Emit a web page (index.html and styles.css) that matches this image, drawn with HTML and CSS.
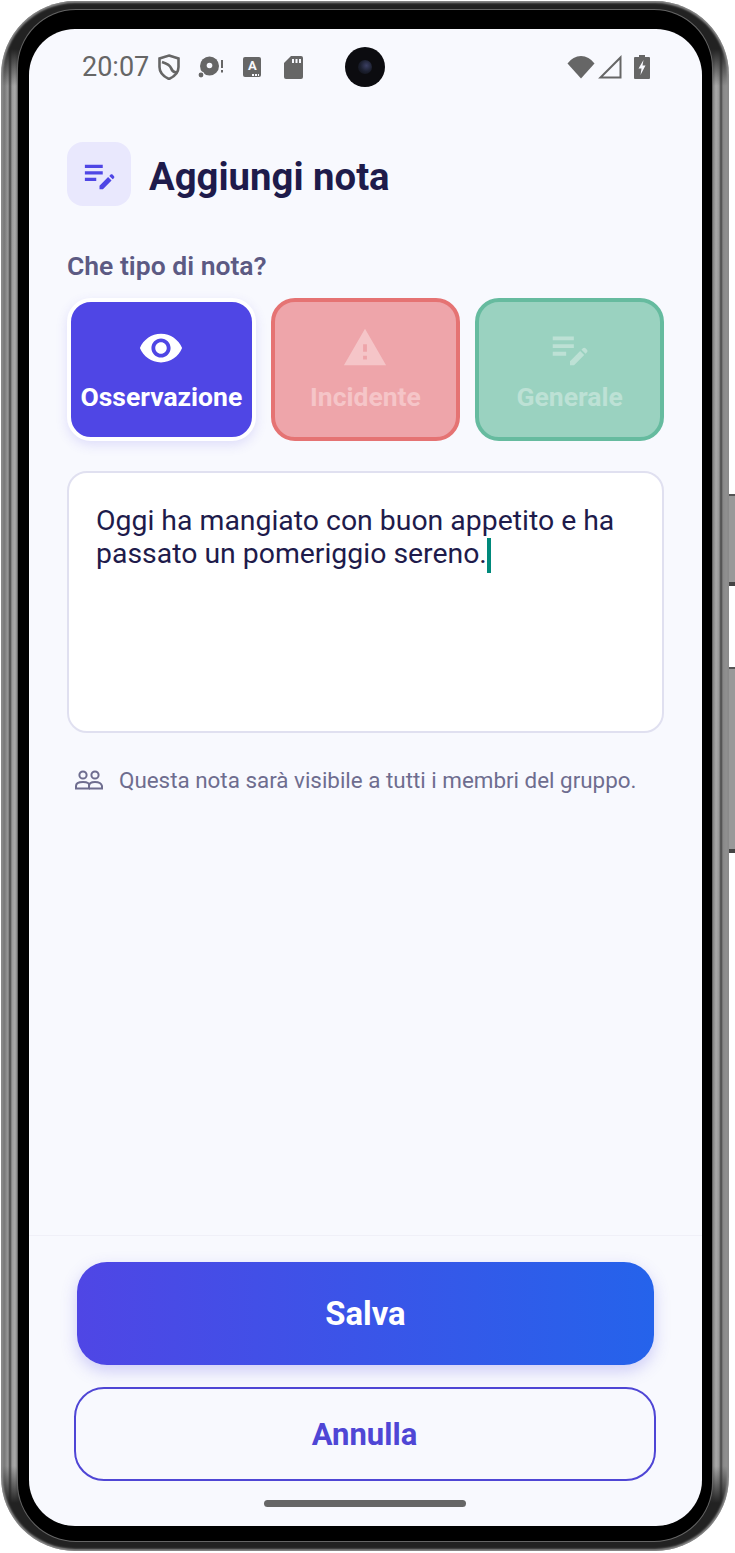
FILE: index.html
```html
<!DOCTYPE html>
<html lang="it">
<head>
    <meta charset="UTF-8">
    <meta name="viewport" content="width=device-width, initial-scale=1.0">
    <title>Aggiungi nota</title>
    <link rel="stylesheet" href="styles.css">
</head>
<body>
    <div class="phone">
        <span class="side-btn side-btn-top"></span>
        <span class="side-btn side-btn-bottom"></span>
        <div class="bezel">
            <div class="screen">
                <span class="camera"><span class="lens"></span></span>

                <!-- Status bar -->
                <div class="status">
                    <div class="status-left">
                        <span class="clock">20:07</span>
                        <svg class="st-shield" viewBox="0 0 22 26"><path d="M11 1.500 20.500 4.500V13C20.500 19 15.500 23 11 25 6.500 23 1.500 19 1.500 13V4.500Z" fill="none" stroke="#666" stroke-width="2.600"/><path d="M4 8C7 9 12 11 13 14S15 18 18 18.500" fill="none" stroke="#666" stroke-width="2.600"/></svg>
                        <svg class="st-disc" viewBox="0 0 26 24"><circle cx="11.500" cy="11" r="9.500" fill="#666"/><circle cx="11.500" cy="10.500" r="2.800" fill="#f8f9fe"/><circle cx="3" cy="20" r="3.400" fill="#f8f9fe"/><circle cx="3" cy="20" r="2.400" fill="#666"/><rect x="23" y="5" width="2" height="8" fill="#666"/><rect x="23" y="15" width="2" height="2.500" fill="#666"/></svg>
                        <span class="st-font">A<i></i></span>
                        <svg class="st-sd" viewBox="0 0 19 23"><path d="M7 0H17Q19 0 19 2V21Q19 23 17 23H2Q0 23 0 21V7Z" fill="#666"/><rect x="8" y="3" width="2" height="4" fill="#f8f9fe"/><rect x="11.500" y="3" width="2" height="4" fill="#f8f9fe"/><rect x="15" y="3" width="2" height="4" fill="#f8f9fe"/></svg>
                    </div>
                    <div class="status-right">
                        <svg class="st-wifi" viewBox="0 0 28 24"><path d="M14 23.500 0.500 8.500Q6 1 14 1T27.500 8.500Z" fill="#666"/></svg>
                        <svg class="st-signal" viewBox="0 0 24 24"><path d="M22.500 2.500V22.500H2.500Z" fill="none" stroke="#666" stroke-width="2"/></svg>
                        <svg class="st-battery" viewBox="0 0 16 24"><path d="M5 0H11V2H15Q16 2 16 3V23Q16 24 15 24H1Q0 24 0 23V3Q0 2 1 2H5Z" fill="#666"/><path d="M9.500 5 4.500 13.500H7.500L6.500 20 11.500 10.500H8.500Z" fill="#f8f9fe"/></svg>
                    </div>
                </div>

                <div class="content">
                    <div class="header">
                        <div class="header-icon">
                            <svg class="icon-note" viewBox="0 0 24 24"><path d="M3 10h11v2H3zm0-2h11V6H3zm0 8h7v-2H3zm15.010-3.130.71-.71c.39-.39 1.020-.39 1.410 0l.71.71c.39.39.39 1.020 0 1.410l-.71.71zm-.71.71-5.300 5.300V21h2.120l5.300-5.300z"/></svg>
                        </div>
                        <h1>Aggiungi nota</h1>
                    </div>

                    <p class="type-label">Che tipo di nota?</p>
                    <div class="types">
                        <div class="type type-active">
                            <svg class="type-icon" viewBox="0 0 24 24"><path d="M12 4.500C7 4.500 2.730 7.610 1 12c1.730 4.390 6 7.500 11 7.500s9.270-3.110 11-7.500c-1.730-4.390-6-7.500-11-7.500zM12 17c-2.760 0-5-2.240-5-5s2.240-5 5-5 5 2.240 5 5-2.240 5-5 5zm0-8c-1.660 0-3 1.340-3 3s1.340 3 3 3 3-1.340 3-3-1.340-3-3-3z"/></svg>
                            <span>Osservazione</span>
                        </div>
                        <div class="type type-red">
                            <svg class="type-icon" viewBox="0 0 24 24"><path d="M1 21h22L12 2 1 21zm12-3h-2v-2h2v2zm0-4h-2v-4h2v4z"/></svg>
                            <span>Incidente</span>
                        </div>
                        <div class="type type-green">
                            <svg class="type-icon" viewBox="0 0 24 24"><path d="M3 10h11v2H3zm0-2h11V6H3zm0 8h7v-2H3zm15.010-3.130.71-.71c.39-.39 1.020-.39 1.410 0l.71.71c.39.39.39 1.020 0 1.410l-.71.71zm-.71.71-5.300 5.300V21h2.120l5.300-5.300z"/></svg>
                            <span>Generale</span>
                        </div>
                    </div>

                    <div class="note-box">Oggi ha mangiato con buon appetito e ha passato un pomeriggio sereno.<span class="caret"></span></div>

                    <div class="hint">
                        <svg class="icon-group" viewBox="0 0 28 20"><g fill="none" stroke="#6e6d8f" stroke-width="2"><circle cx="8" cy="5" r="3.600"/><circle cx="20" cy="5" r="3.600"/><path d="M1 18.500V16Q1 12 8 12T14 16V18.500Z"/><path d="M14 16Q14 12 20 12T27 16V18.500H14"/></g></svg>
                        <span>Questa nota sarà visibile a tutti i membri del gruppo.</span>
                    </div>
                </div>

                <div class="footer">
                    <button class="btn-save">Salva</button>
                    <button class="btn-cancel">Annulla</button>
                    <div class="home-bar"></div>
                </div>
            </div>
        </div>
    </div>
</body>
</html>
```

FILE: styles.css
```css
body {
    margin: 0;
    background-color: #fff;
    font-family: 'Roboto', sans-serif;
}

/* Phone frame */
.phone {
    position: relative;
    box-sizing: border-box;
    width: 728px;
    height: 1550px;
    margin: 1px;
    padding: 9px 17px 10px;
    border-radius: 74px;
    background:
        linear-gradient(180deg, #222 0, #222 48px, transparent 85px, transparent calc(100% - 85px), #222 calc(100% - 48px), #222 100%),
        linear-gradient(90deg, #8a8a8a 0, #777 3px, #999 7px, #444 9px, #999 11px, #aaa 14px, #777 17px, #777 calc(100% - 17px), #aaa calc(100% - 13px), #999 calc(100% - 10px), #444 calc(100% - 8px), #888 calc(100% - 6px), #999 100%);
    box-shadow: inset 0 0 2px 2px #8a8a8a;
}

.side-btn {
    position: absolute;
    right: -6px;
    width: 6px;
    background: #999;
    border-top: 2px solid #555;
    border-bottom: 4px solid #444;
}

.side-btn-top {
    top: 493px;
    height: 86px;
}

.side-btn-bottom {
    top: 666px;
    height: 180px;
}

.bezel {
    box-sizing: border-box;
    height: 100%;
    padding: 19px 10px 15px 11px;
    border-radius: 58px;
    background: #000;
    box-shadow: 0 0 0 1px #666;
}

.screen {
    position: relative;
    display: flex;
    flex-direction: column;
    height: 100%;
    border-radius: 46px;
    background: #f8f9fe;
    overflow: hidden;
}

.camera {
    position: absolute;
    top: 18px;
    left: 316px;
    display: flex;
    align-items: center;
    justify-content: center;
    width: 40px;
    height: 40px;
    border-radius: 50%;
    background: #0c0c10;
}

.lens {
    width: 14px;
    height: 14px;
    border-radius: 50%;
    background: radial-gradient(circle at 60% 40%, #3b3f63 0, #1c2030 50%, #0c0c10 100%);
}

/* Status bar */
.status {
    display: flex;
    justify-content: space-between;
    align-items: center;
    height: 26px;
    padding: 25px 52px 0 53px;
}

.status-left,
.status-right {
    display: flex;
    align-items: center;
}

.clock {
    font-size: 27px;
    color: #666;
}

.st-shield {
    width: 22px;
    height: 26px;
    margin-left: 9px;
}

.st-disc {
    width: 26px;
    height: 24px;
    margin-left: 18px;
}

.st-font {
    position: relative;
    width: 18px;
    height: 20px;
    margin-left: 19px;
    border-radius: 2px;
    background: #666;
    color: #f8f9fe;
    font-size: 13px;
    font-weight: 700;
    line-height: 18px;
    text-align: center;
}

.st-font i {
    position: absolute;
    right: 2px;
    bottom: 1px;
    width: 7px;
    height: 2px;
    background: repeating-linear-gradient(90deg, #f8f9fe 0 2px, transparent 2px 3px);
}

.st-sd {
    width: 19px;
    height: 23px;
    margin-left: 23px;
}

.st-wifi {
    width: 28px;
    height: 24px;
    margin-left: 1px;
}

.st-signal {
    width: 24px;
    height: 24px;
    margin-left: 3px;
}

.st-battery {
    width: 16px;
    height: 24px;
    margin-left: 12px;
}

/* Main content */
.content {
    flex: 1;
    padding: 62px 38px 0;
}

.header {
    display: flex;
    align-items: center;
    gap: 18px;
}

.header-icon {
    display: flex;
    align-items: center;
    justify-content: center;
    width: 64px;
    height: 64px;
    border-radius: 16px;
    background: #e9e8fd;
}

.icon-note {
    width: 39px;
    height: 39px;
    fill: #4f46e5;
}

h1 {
    margin: 4px 0 0;
    font-size: 38.300px;
    font-weight: 700;
    color: #1e1b4b;
}

.type-label {
    margin: 45px 0 17px;
    font-size: 26.500px;
    font-weight: 600;
    line-height: 30px;
    color: #5c5a83;
}

.types {
    display: grid;
    grid-template-columns: repeat(3, 1fr);
    gap: 15.500px;
}

.type {
    box-sizing: border-box;
    display: flex;
    flex-direction: column;
    align-items: center;
    height: 143px;
    padding-top: 23px;
    border: 4px solid;
    border-radius: 24px;
    font-size: 26.500px;
    font-weight: 700;
}

.type-icon {
    width: 46px;
    height: 46px;
    fill: currentColor;
}

.type span {
    margin-top: 11px;
    line-height: 30px;
}

.type-active {
    background: #4f46e5;
    border-color: #fff;
    color: #fff;
    box-shadow: 0 4px 12px rgba(79, 70, 229, 0.15);
}

.type-red {
    background: #eea5aa;
    border-color: #e57373;
    color: #f5c5c8;
}

.type-green {
    background: #9ad2c0;
    border-color: #66bb9f;
    color: #bde1d5;
}

.note-box {
    box-sizing: border-box;
    height: 262px;
    margin-top: 30px;
    padding: 31px 27px;
    border: 2px solid #e0e0f0;
    border-radius: 20px;
    background: #fff;
    font-size: 28.400px;
    line-height: 33px;
    color: #1e1b4b;
}

.caret {
    display: inline-block;
    width: 4px;
    height: 35px;
    margin: -4px 0 -4px 0;
    vertical-align: -6px;
    background: #00897b;
}

.hint {
    display: flex;
    align-items: center;
    gap: 16px;
    margin: 33px 0 0 8px;
    font-size: 22.400px;
    line-height: 28px;
    color: #6e6d8f;
}

.icon-group {
    width: 28px;
    height: 20px;
}

/* Footer buttons */
.footer {
    display: flex;
    flex-direction: column;
    align-items: center;
    padding-top: 26px;
    border-top: 1px solid #f0f0f8;
}

.btn-save {
    width: 577px;
    height: 103px;
    border: none;
    border-radius: 30px;
    background: linear-gradient(90deg, #4f46e5, #2563eb);
    box-shadow: 0 6px 16px rgba(79, 70, 229, 0.25);
    color: #fff;
    font-family: inherit;
    font-size: 32.800px;
    font-weight: 700;
}

.btn-cancel {
    width: 582px;
    height: 94px;
    margin: 22px 2px 0 0;
    border: 2.500px solid #4f46d5;
    border-radius: 30px;
    background: transparent;
    color: #4f46d5;
    font-family: inherit;
    font-size: 31px;
    font-weight: 700;
}

.home-bar {
    width: 202px;
    height: 7px;
    margin: 19px 2px 19px 0;
    border-radius: 4px;
    background: #666;
}
```
